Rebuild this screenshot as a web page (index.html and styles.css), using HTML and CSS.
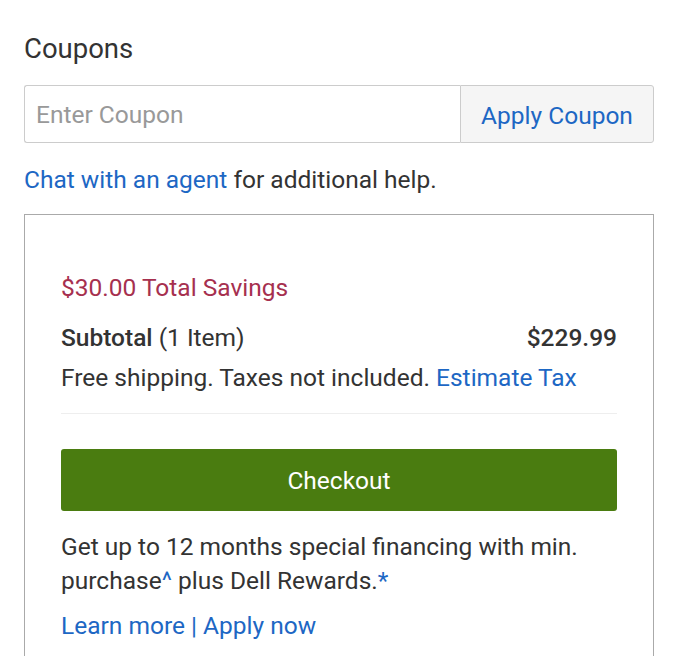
FILE: index.html
```html
<!DOCTYPE html>
<html>
<head>
<meta charset="utf-8">
<link rel="stylesheet" href="styles.css">
</head>
<body>
<div class="page">
  <h2 class="title">Coupons</h2>
  <div class="coupon-row">
    <div class="coupon-input">Enter Coupon</div>
    <div class="coupon-btn">Apply Coupon</div>
  </div>
  <p class="chat"><span class="link">Chat with an agent</span> for additional help.</p>
  <div class="summary">
    <div class="savings">$30.00 Total Savings</div>
    <div class="subtotal-row">
      <div><span class="strong">Subtotal</span> (1 Item)</div>
      <div class="strong">$229.99</div>
    </div>
    <div class="shipping">Free shipping. Taxes not included. <span class="link">Estimate Tax</span></div>
    <div class="divider"></div>
    <div class="checkout">Checkout</div>
    <p class="finance">Get up to 12 months special financing with min. purchase<span class="link">^</span> plus Dell Rewards.<span class="link">*</span></p>
    <div class="finance-links"><span class="link">Learn more</span> <span class="link">|</span> <span class="link">Apply now</span></div>
  </div>
</div>
</body>
</html>
```
FILE: styles.css
```css
html, body {
  margin: 0;
  padding: 0;
  background: #fff;
}
body {
  font-family: Roboto, "Liberation Sans", sans-serif;
  color: #333;
  font-size: 24.5px;
}
.page {
  padding: 32px 32px 0 24px;
}
.title {
  margin: 0;
  font-size: 27.5px;
  font-weight: 400;
  line-height: 34px;
}
.coupon-row {
  display: flex;
  margin-top: 19px;
  height: 58px;
}
.coupon-input {
  flex: 1;
  border: 1px solid #ccc;
  border-right: none;
  border-radius: 3px 0 0 3px;
  display: flex;
  align-items: center;
  padding-left: 11px;
  color: #999;
}
.coupon-btn {
  width: 194px;
  box-sizing: border-box;
  border: 1px solid #ccc;
  border-radius: 0 3px 3px 0;
  background: #f5f5f5;
  color: #1d67c4;
  display: flex;
  align-items: center;
  justify-content: center;
  padding-top: 3px;
}
.link {
  color: #1d67c4;
}
.chat {
  margin: 21px 0 0;
  line-height: 32px;
}
.summary {
  margin-top: 18px;
  border: 1px solid #aaa;
  border-bottom: none;
  padding: 57px 36px 20px;
  height: 500px;
}
.savings {
  color: #a6304f;
  line-height: 32px;
}
.subtotal-row {
  display: flex;
  justify-content: space-between;
  margin-top: 18px;
  line-height: 32px;
}
.strong {
  font-weight: 500;
}
.shipping {
  margin-top: 8px;
  line-height: 32px;
}
.divider {
  margin-top: 19px;
  border-top: 1px solid #eee;
}
.checkout {
  margin-top: 35px;
  height: 62px;
  background: #4a7c10;
  border-radius: 3px;
  color: #fff;
  display: flex;
  align-items: center;
  justify-content: center;
}
.finance {
  margin: 19px 0 0;
  line-height: 34px;
}
.finance-links {
  margin-top: 11px;
  line-height: 34px;
}
```
